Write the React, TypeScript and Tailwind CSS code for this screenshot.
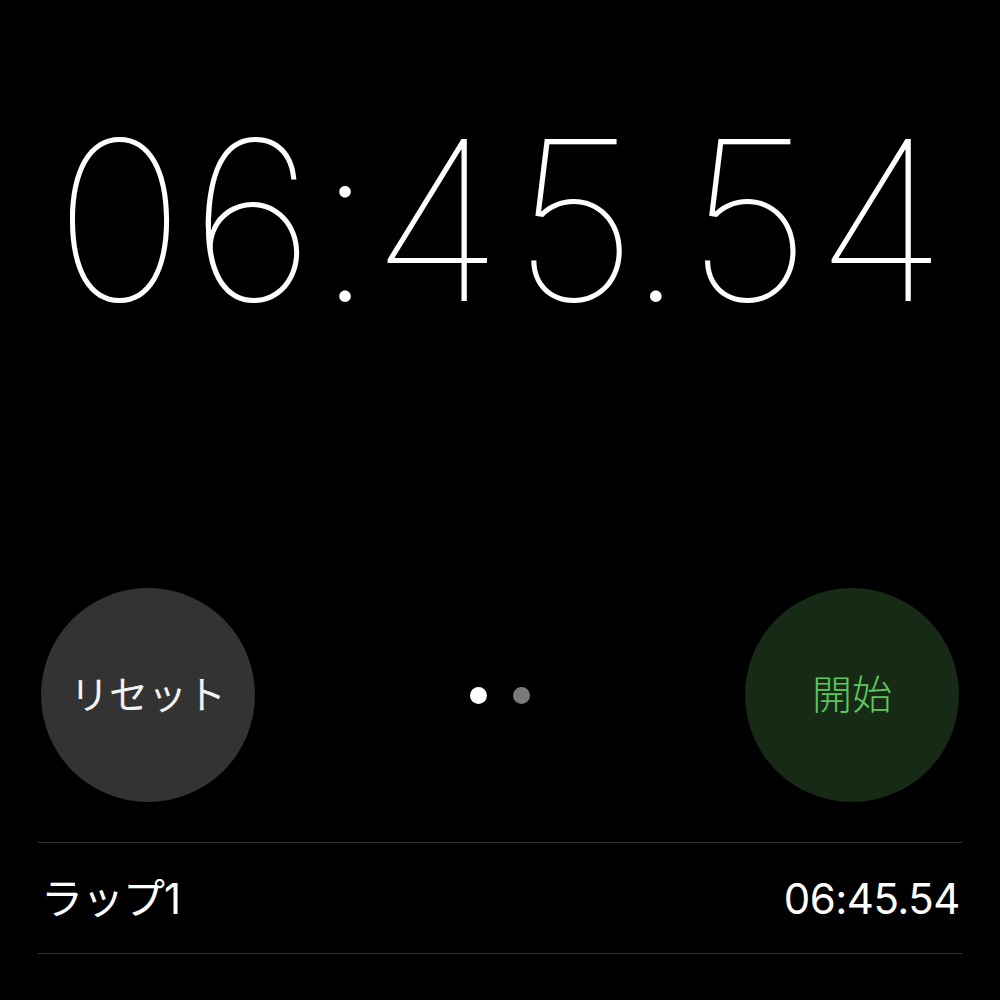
import React from 'react';

const font = { fontFamily: 'Inter, "Noto Sans CJK JP", sans-serif' };

// per-character tracking so the thin digits sit at the reference spacing
const bigChars = [
  { ch: '0', cls: 'tracking-[-10px]' },
  { ch: '6', cls: 'tracking-[-9px]' },
  { ch: ':', cls: 'tracking-[-9px]' },
  { ch: '4', cls: 'tracking-[-4px]' },
  { ch: '5', cls: 'tracking-[-22px]' },
  { ch: '.', cls: 'tracking-[-7px]' },
  { ch: '5', cls: 'tracking-[-12px]' },
  { ch: '4', cls: 'tracking-[0px]' },
];

const App: React.FC = () => {
  return (
    <div className="w-[1000px] h-[1000px] bg-black overflow-hidden text-white" style={font}>
      {/* main timer */}
      <div className="pt-[110px] pl-[48px] whitespace-nowrap text-[222px] leading-none font-thin tabular-nums">
        {bigChars.map((c, i) => (
          <span key={i} className={c.cls}>
            {c.ch}
          </span>
        ))}
      </div>

      {/* controls */}
      <div className="mt-[256px] px-[41px] flex items-center justify-between">
        <button className="w-[214px] h-[214px] rounded-full bg-[#333333] flex items-center justify-center text-[39px] text-[#f2f2f2]">
          リセット
        </button>
        <div className="flex items-center gap-[26px]">
          <span className="w-[17px] h-[17px] rounded-full bg-white" />
          <span className="w-[17px] h-[17px] rounded-full bg-[#7a7a7a]" />
        </div>
        <button className="w-[214px] h-[214px] rounded-full bg-[#162a16] flex items-center justify-center text-[40px] font-light text-[#5cc85c]">
          開始
        </button>
      </div>

      {/* laps */}
      <div className="mt-[40px] mx-[38px] border-t border-b border-[#333333]">
        <div className="h-[110px] flex items-center justify-between pl-[3px] pr-[2px] text-[42px] tracking-[-0.5px]">
          <span className="tracking-[-1px]">ラップ1</span>
          <span>06:45.54</span>
        </div>
      </div>
    </div>
  );
};

export default App;
